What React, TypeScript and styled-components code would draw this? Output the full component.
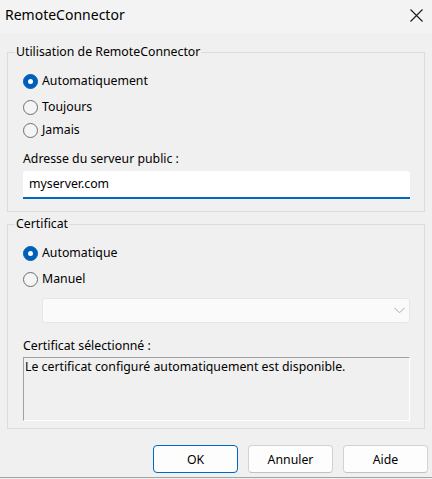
import React from "react";
import styled, { createGlobalStyle } from "styled-components";

const GlobalStyle = createGlobalStyle`
  html, body {
    margin: 0;
    padding: 0;
    background: #f0f0f0;
  }
  * {
    box-sizing: border-box;
  }
`;

const FONT = `"Noto Sans", "DejaVu Sans", sans-serif`;
const TEXT_SIZE = "12.3px";

const Window = styled.div`
  width: 432px;
  background: #f0f0f0;
  border-bottom: 1px solid #a3a3a3;
  font-family: ${FONT};
  font-size: ${TEXT_SIZE};
  color: #000;
`;

const TitleBar = styled.div`
  height: 33px;
  display: flex;
  justify-content: space-between;
  align-items: flex-start;
  padding: 5px 9px 0 5px;
  background: #f3f3f3;
`;

const Title = styled.div`
  font-size: 14px;
  line-height: 20px;
  color: #000;
`;

const CloseIcon = styled.svg`
  margin-top: 4px;
  width: 13px;
  height: 13px;
`;

const Body = styled.div`
  padding: 11px 4px 4px 7px;
  display: flex;
  flex-direction: column;
`;

const Group = styled.fieldset<{ $mt?: number }>`
  margin: ${(p) => p.$mt ?? 0}px 3px 0 0;
  padding: 0;
  min-width: 0;
  border: 1px solid #dcdcdc;
`;

const Legend = styled.legend`
  margin-left: 7px;
  padding: 0 1px;
  font-size: ${TEXT_SIZE};
  line-height: 16px;
`;

const GroupBody = styled.div<{ $pb: number }>`
  display: flex;
  flex-direction: column;
  padding: 10px 14px ${(p) => p.$pb}px 15px;
`;

const RadioRow = styled.label<{ $mt?: number }>`
  display: flex;
  align-items: center;
  gap: 4px;
  height: 22px;
  margin-top: ${(p) => p.$mt ?? 0}px;
  line-height: 16px;
`;

const RadioDot = styled.span<{ $checked?: boolean }>`
  position: relative;
  width: 15px;
  height: 15px;
  border-radius: 50%;
  flex: none;
  background: ${(p) => (p.$checked ? "#005fb8" : "#f5f5f5")};
  border: 1px solid ${(p) => (p.$checked ? "#005fb8" : "#6e6e6e")};

  &::after {
    content: "";
    display: ${(p) => (p.$checked ? "block" : "none")};
    position: absolute;
    left: 4px;
    top: 4px;
    width: 5px;
    height: 5px;
    border-radius: 50%;
    background: #fff;
  }
`;

const FieldLabel = styled.div<{ $mt: number }>`
  margin-top: ${(p) => p.$mt}px;
  line-height: 16px;
`;

const TextInput = styled.div`
  margin-top: 4px;
  height: 28px;
  display: flex;
  align-items: center;
  padding: 0 6px;
  background: #fff;
  border-radius: 3px 3px 0 0;
  border-bottom: 2px solid #0067c0;
  line-height: 16px;
`;

const Select = styled.div`
  margin: 8px 0 0 19px;
  height: 25px;
  display: flex;
  justify-content: flex-end;
  align-items: center;
  padding-right: 4px;
  background: #fafafa;
  border: 1px solid #e6e6e6;
  border-radius: 3px;
`;

const Chevron = styled.svg`
  width: 11px;
  height: 7px;
`;

const InfoBox = styled.div`
  margin-top: 3px;
  height: 64px;
  padding: 1px;
  border-style: solid;
  border-width: 1px;
  border-color: #a0a0a0 #ffffff #ffffff #a0a0a0;
  line-height: 16px;
`;

const ButtonRow = styled.div`
  display: flex;
  justify-content: flex-end;
  gap: 10px;
  margin-top: 16px;
`;

const Button = styled.button<{ $primary?: boolean }>`
  width: 85px;
  height: 28px;
  padding: 0;
  font-family: ${FONT};
  font-size: ${TEXT_SIZE};
  color: #000;
  background: #fdfdfd;
  border-radius: 4px;
  border: 1px solid ${(p) => (p.$primary ? "#0067c0" : "#d3d3d3")};
  border-bottom-color: ${(p) => (p.$primary ? "#0067c0" : "#c2c2c2")};
`;

export default function App() {
  return (
    <>
      <GlobalStyle />
      <Window>
        <TitleBar>
          <Title>RemoteConnector</Title>
          <CloseIcon viewBox="0 0 13 13">
            <path d="M0.5 0.5 L12.5 12.5 M12.5 0.5 L0.5 12.5" stroke="#1a1a1a" strokeWidth="1.1" />
          </CloseIcon>
        </TitleBar>
        <Body>
          <Group>
            <Legend>Utilisation de RemoteConnector</Legend>
            <GroupBody $pb={12}>
              <RadioRow>
                <RadioDot $checked />
                Automatiquement
              </RadioRow>
              <RadioRow $mt={4}>
                <RadioDot />
                Toujours
              </RadioRow>
              <RadioRow $mt={1}>
                <RadioDot />
                Jamais
              </RadioRow>
              <FieldLabel $mt={10}>Adresse du serveur public :</FieldLabel>
              <TextInput>myserver.com</TextInput>
            </GroupBody>
          </Group>
          <Group $mt={4}>
            <Legend>Certificat</Legend>
            <GroupBody $pb={7}>
              <RadioRow>
                <RadioDot $checked />
                Automatique
              </RadioRow>
              <RadioRow $mt={4}>
                <RadioDot />
                Manuel
              </RadioRow>
              <Select>
                <Chevron viewBox="0 0 11 7">
                  <path d="M0.5 0.8 L5.5 5.8 L10.5 0.8" fill="none" stroke="#a8a8a8" strokeWidth="1" />
                </Chevron>
              </Select>
              <FieldLabel $mt={15}>Certificat sélectionné :</FieldLabel>
              <InfoBox>Le certificat configuré automatiquement est disponible.</InfoBox>
            </GroupBody>
          </Group>
          <ButtonRow>
            <Button $primary>OK</Button>
            <Button>Annuler</Button>
            <Button>Aide</Button>
          </ButtonRow>
        </Body>
      </Window>
    </>
  );
}
